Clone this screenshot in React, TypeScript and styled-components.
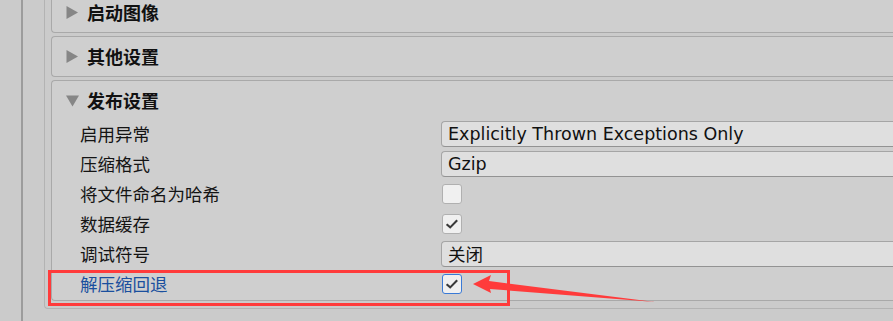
import styled, { createGlobalStyle } from "styled-components";

const GlobalStyle = createGlobalStyle`
  html, body {
    margin: 0;
    padding: 0;
    background: #cbcbcb;
    overflow: hidden;
  }
  body {
    font-family: "DejaVu Sans", "Noto Sans CJK SC", sans-serif;
    color: #101010;
  }
`;

type Row =
  | { label: string; kind: "select"; value: string }
  | { label: string; kind: "check"; checked: boolean; focused?: boolean };

const rows: Row[] = [
  { label: "启用异常", kind: "select", value: "Explicitly Thrown Exceptions Only" },
  { label: "压缩格式", kind: "select", value: "Gzip" },
  { label: "将文件命名为哈希", kind: "check", checked: false },
  { label: "数据缓存", kind: "check", checked: true },
  { label: "调试符号", kind: "select", value: "关闭" },
  { label: "解压缩回退", kind: "check", checked: true, focused: true },
];

function Check({ checked, focused }: { checked: boolean; focused?: boolean }) {
  return (
    <CheckBox $focused={focused}>
      {checked && (
        <svg width="16" height="16" viewBox="0 0 16 16">
          <path d="M2.6 8.2 L6.2 11.4 L13.2 4.2" fill="none" stroke="#3a3a3a" strokeWidth="2.1" />
        </svg>
      )}
    </CheckBox>
  );
}

function Fold({ open }: { open?: boolean }) {
  return (
    <FoldIcon width="13" height="13" viewBox="0 0 13 13">
      {open ? <polygon points="0,1.5 13,1.5 6.5,12.5" /> : <polygon points="0.5,0 12,6.5 0.5,13" />}
    </FoldIcon>
  );
}

function App() {
  return (
    <Page>
      <GlobalStyle />
      <Gutter />
      <Inspector>
        <Panels>
          <Panel>
            <Header>
              <Fold />
              <HeaderTitle>启动图像</HeaderTitle>
            </Header>
          </Panel>
          <Panel>
            <Header>
              <Fold />
              <HeaderTitle>其他设置</HeaderTitle>
            </Header>
          </Panel>
          <Panel>
            <Header>
              <Fold open />
              <HeaderTitle>发布设置</HeaderTitle>
            </Header>
            <Fields>
              {rows.map((r) => (
                <Field key={r.label}>
                  <Label $active={r.kind === "check" && r.focused}>{r.label}</Label>
                  {r.kind === "select" ? (
                    <Select>{r.value}</Select>
                  ) : (
                    <Check checked={r.checked} focused={r.focused} />
                  )}
                </Field>
              ))}
            </Fields>
          </Panel>
        </Panels>
      </Inspector>
      <Highlight />
      <Pointer width="893" height="321" viewBox="0 0 893 321">
        <polygon
          points="473,284 491,275 489,281 655,302 490,289 491,293"
          fill="#ff3b3b"
        />
      </Pointer>
    </Page>
  );
}

const Page = styled.div`
  position: relative;
  display: flex;
  width: 893px;
  height: 321px;
  overflow: hidden;
  background: #cbcbcb;
`;

const Gutter = styled.div`
  width: 21px;
  flex: none;
  border-right: 2px solid #9c9c9c;
`;

const Inspector = styled.div`
  margin-left: 21px;
  flex: 1;
  align-self: flex-start;
  border-left: 1px solid #b3b3b3;
  border-bottom: 1px solid #b3b3b3;
  border-bottom-left-radius: 4px;
  padding: 0 0 7px 6px;
`;

const Panels = styled.div`
  display: flex;
  flex-direction: column;
  gap: 3px;
  margin-top: -8px;
`;

const Panel = styled.section`
  border: 1px solid #a9a9a9;
  border-right: none;
  border-radius: 4px 0 0 4px;
  background: #cfcfcf;
`;

const Header = styled.div`
  height: 39px;
  display: flex;
  align-items: center;
  padding-left: 14px;
  gap: 8px;
`;

const FoldIcon = styled.svg`
  flex: none;
  fill: #868686;
`;

const HeaderTitle = styled.span`
  font-family: "Noto Sans CJK SC", sans-serif;
  font-weight: 700;
  font-size: 18px;
  color: #111;
  margin-top: -2px;
`;

const Fields = styled.div`
  display: flex;
  flex-direction: column;
`;

const Field = styled.div`
  display: grid;
  grid-template-columns: 360px 1fr;
  height: 30px;
  align-items: center;
  padding-left: 28px;
`;

const Label = styled.span<{ $active?: boolean }>`
  font-family: "Noto Sans CJK SC", sans-serif;
  font-size: 17.5px;
  color: ${(p) => (p.$active ? "#1a4f9e" : "#141414")};
  line-height: 1;
  margin-top: -2px;
`;

const Select = styled.div`
  height: 24px;
  margin-top: -3px;
  margin-left: 1px;
  display: flex;
  align-items: center;
  padding-left: 6px;
  background: #dfdfdf;
  border: 1px solid #a5a5a5;
  border-bottom-color: #939393;
  border-right: none;
  border-radius: 4px 0 0 4px;
  font-family: "DejaVu Sans", "Noto Sans CJK SC", sans-serif;
  font-size: 17.5px;
  color: #111;
  white-space: nowrap;
`;

const CheckBox = styled.div<{ $focused?: boolean }>`
  width: 18px;
  height: 18px;
  margin-left: 2px;
  margin-top: -2px;
  display: flex;
  align-items: center;
  justify-content: center;
  background: #f0f0f0;
  border: 1px solid ${(p) => (p.$focused ? "#3a7ad6" : "#b0b0b0")};
  border-radius: 3px;
`;

const Highlight = styled.div`
  position: absolute;
  left: 48px;
  top: 270px;
  width: 456px;
  height: 30px;
  border: 3px solid #ff3b3b;
`;

const Pointer = styled.svg`
  position: absolute;
  left: 0;
  top: 0;
  pointer-events: none;
`;

export default App;
